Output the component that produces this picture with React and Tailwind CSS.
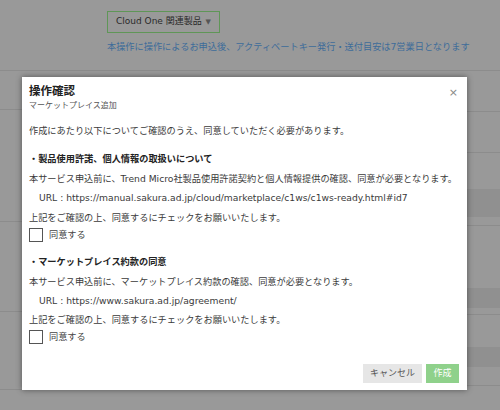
import React from "react";

const jp = { fontFamily: '"DejaVu Sans", "Noto Sans CJK JP", sans-serif' };

function Agree() {
  return (
    <label className="flex items-center gap-[6px] h-[14px] mt-[1px]">
      <span className="w-[14px] h-[14px] border-[1.5px] border-[#555] bg-white" />
      <span className="text-[9.2px] text-[#444]">同意する</span>
    </label>
  );
}

export default function App() {
  return (
    <div className="relative w-[500px] h-[410px] overflow-hidden bg-[#999]" style={jp}>
      {/* page behind the overlay */}
      <div className="h-[71px] border-b border-[#8c8c8c] pl-[107px] pt-[11px]">
        <div className="w-[113px] h-[22px] border border-[#5f9657] flex items-center justify-between px-[8px] text-[9px] text-[#2a2a2a]">
          <span>Cloud One 関連製品</span>
          <span className="text-[7px] text-[#555]">▼</span>
        </div>
        <p className="mt-[8px] text-[9.2px] leading-[12px] text-[#3d6c9a] whitespace-nowrap">
          本操作に操作によるお申込後、アクティベートキー発行・送付目安は7営業日となります
        </p>
      </div>
      <div className="flex">
        <div className="w-[107px]">
          <div className="h-[39px] border-b border-[#8c8c8c]" />
          <div className="h-[112px] border-b border-[#8c8c8c]" />
          <div className="h-[90px] border-b border-[#8c8c8c]" />
          <div className="h-[78px] border-b border-[#8c8c8c]" />
        </div>
        <div className="w-[30px] flex flex-col justify-end">
          <div className="h-[20px] border-x border-[#5f9657] flex items-center justify-center gap-[4px] text-[8px] text-[#444]">
            <span>-</span>
            <span className="text-[6px]">▼</span>
          </div>
        </div>
        <div className="flex-1">
          <div className="h-[41px] border-b border-[#8c8c8c]" />
          <div className="h-[41px] border-b border-[#8c8c8c]" />
          <div className="h-[36px]" />
          <div className="h-[28px] bg-[#909090]" />
          <div className="h-[9px] border-b border-[#8c8c8c]" />
          <div className="h-[62px]" />
          <div className="h-[20px] bg-[#909090]" />
          <div className="h-[7px] border-b border-[#8c8c8c]" />
          <div className="h-[32px]" />
          <div className="h-[20px] bg-[#909090]" />
          <div className="h-[19px] border-b border-[#8c8c8c]" />
        </div>
      </div>

      {/* modal */}
      <div className="absolute left-[22px] top-[77px] w-[445px] h-[313px] bg-white shadow-[0_0_6px_rgba(0,0,0,0.45)] flex flex-col px-[7px] pt-[7px] pb-[7px] text-[#3a3a3a]">
        <div className="relative">
          <h2 className="text-[11.5px] leading-[14px] font-bold text-[#222]">操作確認</h2>
          <p className="mt-[2px] text-[8px] leading-[12px] text-[#555]">マーケットプレイス追加</p>
          <span className="absolute right-[2px] top-[3px] text-[11px] leading-none text-[#888]">×</span>
        </div>

        <div className="mt-[8.5px] text-[9.2px] leading-[19.5px] whitespace-nowrap">
          <p>作成にあたり以下についてご確認のうえ、同意していただく必要があります。</p>

          <p className="mt-[9px] font-bold text-[#222]">・製品使用許諾、個人情報の取扱いについて</p>
          <p>本サービス申込前に、Trend Micro社製品使用許諾契約と個人情報提供の確認、同意が必要となります。</p>
          <p className="pl-[10px]">URL : https://manual.sakura.ad.jp/cloud/marketplace/c1ws/c1ws-ready.html#id7</p>
          <p>上記をご確認の上、同意するにチェックをお願いいたします。</p>
          <Agree />

          <p className="mt-[10px] font-bold text-[#222]">・マーケットプレイス約款の同意</p>
          <div className="leading-[19px]">
            <p>本サービス申込前に、マーケットプレイス約款の確認、同意が必要となります。</p>
            <p className="pl-[10px]">URL : https://www.sakura.ad.jp/agreement/</p>
            <p>上記をご確認の上、同意するにチェックをお願いいたします。</p>
          </div>
          <Agree />
        </div>

        <div className="mt-auto flex justify-end gap-[4px] pr-[1px]">
          <button className="w-[59px] h-[19px] bg-[#e6e6e6] text-[9px] text-[#555]">キャンセル</button>
          <button className="w-[33px] h-[19px] bg-[#8fd18b] text-[9px] text-white">作成</button>
        </div>
      </div>
    </div>
  );
}
